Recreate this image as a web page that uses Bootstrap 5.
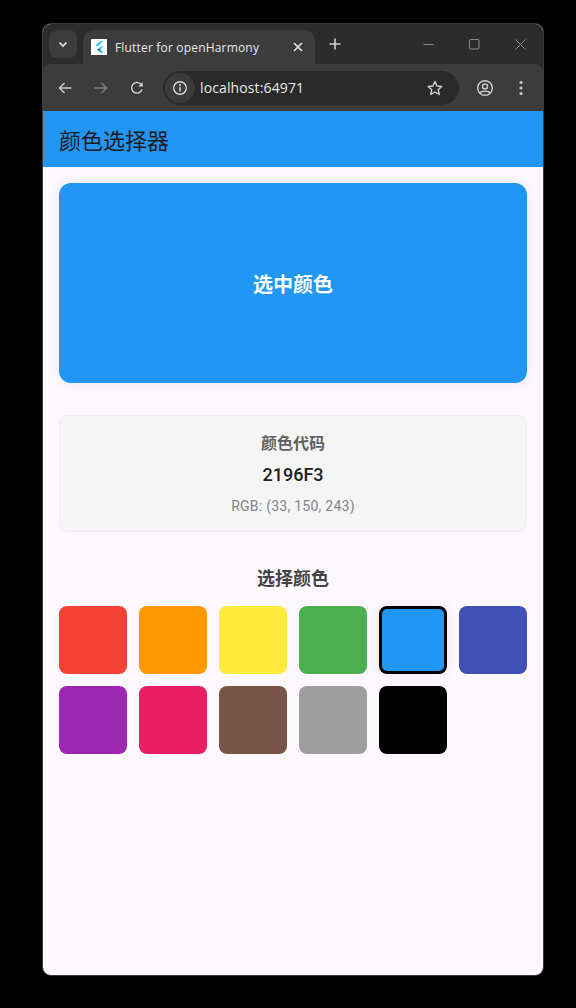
<!DOCTYPE html>
<html lang="zh">
<head>
<meta charset="utf-8">
<title>Flutter for openHarmony</title>
<link href="https://cdn.jsdelivr.net/npm/bootstrap@5.3.0/dist/css/bootstrap.min.css" rel="stylesheet">
<style>
html,body{height:100%;}
body{background:#000;font-family:Roboto,"Noto Sans CJK SC",sans-serif;overflow:hidden;}
.stage{padding:24px 33px 33px 43px;height:1008px;}
.win{height:951px;border-radius:8px;overflow:hidden;background:#fdf8fe;box-shadow:0 0 0 1px #3a3a3a;}
.chromebar{background:#2c2c2c;}
.strip{height:40px;}
.tabmenu{width:28px;height:28px;margin:6px 0 0 6px;border-radius:8px;background:#3c3c3c;}
.tabitem{width:232px;height:34px;margin:6px 0 0 6px;background:#3c3c3c;border-radius:10px 10px 0 0;padding:0 8px;color:#e6e6e6;font:12px "Open Sans",sans-serif;letter-spacing:.18px;}
.favi{width:16px;height:16px;background:#fff;}
.winbtn{width:46px;}
.toolbar{height:47px;background:#3c3c3c;padding:0 4px 0 6px;border-radius:8px 8px 0 0;}
.omni{width:296px;height:34px;border-radius:17px;background:#2a2a2a;margin-left:10px;padding:0 16px 0 2px;color:#e8e8e8;font:14px "Open Sans",sans-serif;letter-spacing:.12px;}
.infobub{width:30px;height:30px;border-radius:50%;background:#3c3c3c;margin-right:5px;}
.tbtn{width:32px;}
.appbar{height:56px;background:#2196f3;padding:4px 16px 0;color:#1d1b20;font-size:22px;}
.pagebody{padding:16px;}
.swatchbig{height:200px;padding-top:4px;background:#2196f3;border-radius:12px;box-shadow:0 0 8px 2px rgba(80,50,110,.06);color:#fff;font-size:20px;font-weight:700;}
.codebox{height:117px;margin-top:32px;background:#f5f5f5;border:1px solid #f2eef4;border-radius:8px;}
.codelabel{font-size:16px;font-weight:700;color:#616161;line-height:22px;margin-top:17px;}
.codeval{font-size:18px;font-weight:500;color:#212121;line-height:24px;margin-top:8px;}
.codergb{font-size:14px;color:#858585;line-height:20px;margin-top:9px;letter-spacing:.25px;}
.picktitle{font-size:18px;font-weight:700;color:#424242;line-height:24px;margin-top:35px;margin-bottom:15px;}
.palette{display:grid;grid-template-columns:repeat(6,68px);gap:12px;}
.chip{height:68px;border-radius:8px;}
.chip-on{border:3px solid #000;box-shadow:0 0 8px 2px rgba(80,50,110,.07);}
</style>
</head>
<body>
<div class="stage">
<div class="win d-flex flex-column">
  <div class="chromebar flex-shrink-0">
  <div class="strip d-flex align-items-start">
    <div class="tabmenu d-flex align-items-center justify-content-center">
      <svg width="12" height="12" viewBox="0 0 12 12"><path d="M2.500 4.500 6 8l3.500-3.500" fill="none" stroke="#e6e6e6" stroke-width="1.700"/></svg>
    </div>
    <div class="tabitem d-flex align-items-center">
      <span class="favi d-flex align-items-center justify-content-center flex-shrink-0">
        <svg width="14" height="14" viewBox="0 0 16 16"><path d="M9.500 1h3.500L6 8 4 6z" fill="#47c5fb"/><path d="M9.500 7.500H13L9.500 11 7.700 9.300z" fill="#47c5fb"/><path d="M7.700 12.700 6 11l1.700-1.700 1.800 1.700z" fill="#00569e"/><path d="M9.500 14.500H13l-3.500-3.500-1.800 1.700z" fill="#00b5f8"/></svg>
      </span>
      <span class="ms-2 flex-grow-1 text-nowrap">Flutter for openHarmony</span>
      <svg width="10" height="10" viewBox="0 0 10 10" class="me-1"><path d="M1 1l8 8M9 1 1 9" stroke="#e6e6e6" stroke-width="1.600"/></svg>
    </div>
    <div class="d-flex align-items-center justify-content-center" style="width:40px;height:40px">
      <svg width="12" height="12" viewBox="0 0 12 12"><path d="M6 .5v11M.5 6h11" stroke="#d0d0d0" stroke-width="1.600"/></svg>
    </div>
    <div class="d-flex ms-auto align-items-center" style="height:40px">
      <span class="winbtn d-flex justify-content-center"><svg width="11" height="11" viewBox="0 0 11 11"><path d="M.5 5.500h10" stroke="#8c8c8c"/></svg></span>
      <span class="winbtn d-flex justify-content-center"><svg width="11" height="11" viewBox="0 0 11 11"><rect x=".5" y=".5" width="9.500" height="9.500" rx="1" fill="none" stroke="#8c8c8c"/></svg></span>
      <span class="winbtn d-flex justify-content-center"><svg width="11" height="11" viewBox="0 0 11 11"><path d="M.5.5l10 10M10.500.5l-10 10" stroke="#8c8c8c"/></svg></span>
    </div>
  </div>
  <div class="toolbar d-flex align-items-center">
    <span class="tbtn d-flex justify-content-center"><svg width="16" height="16" viewBox="0 0 16 16"><path d="M14.500 8H2.500M7.500 3 2.500 8l5 5" fill="none" stroke="#c8c8c8" stroke-width="1.500"/></svg></span>
    <span class="tbtn d-flex justify-content-center ms-1"><svg width="16" height="16" viewBox="0 0 16 16"><path d="M1.500 8h12M8.500 3l5 5-5 5" fill="none" stroke="#7d7d7d" stroke-width="1.500"/></svg></span>
    <span class="tbtn d-flex justify-content-center ms-1"><svg width="16" height="16" viewBox="0 0 16 16"><path d="M13 9.500A5.300 5.300 0 1 1 11.700 4L13.500 6" fill="none" stroke="#c8c8c8" stroke-width="1.500"/><path d="M13.700 2v4.500H9.200z" fill="#c8c8c8"/></svg></span>
    <div class="omni d-flex align-items-center">
      <span class="infobub d-flex align-items-center justify-content-center flex-shrink-0">
        <svg width="16" height="16" viewBox="0 0 16 16"><circle cx="8" cy="8" r="6.300" fill="none" stroke="#d8d8d8" stroke-width="1.400"/><path d="M8 7v4.500" stroke="#d8d8d8" stroke-width="1.500"/><circle cx="8" cy="5" r="1" fill="#d8d8d8"/></svg>
      </span>
      <span class="flex-grow-1">localhost:64971</span>
      <svg width="16" height="16" viewBox="0 0 16 16"><path d="M8 1.500 10 6l4.800.5-3.600 3.200 1 4.800L8 12l-4.200 2.500 1-4.800L1.200 6.500 6 6z" fill="none" stroke="#d0d0d0" stroke-width="1.400" stroke-linejoin="round"/></svg>
    </div>
    <span class="d-flex justify-content-center" style="margin-left:16px;width:20px"><svg width="18" height="18" viewBox="0 0 18 18"><circle cx="9" cy="9" r="7.300" fill="none" stroke="#c8c8c8" stroke-width="1.500"/><circle cx="9" cy="7.500" r="2.500" fill="none" stroke="#c8c8c8" stroke-width="1.500"/><path d="M4 14c1-2.500 9-2.500 10 0" fill="none" stroke="#c8c8c8" stroke-width="1.500"/></svg></span>
    <span class="d-flex justify-content-center" style="margin-left:22px;width:8px"><svg width="4" height="16" viewBox="0 0 4 16"><circle cx="2" cy="2.500" r="1.600" fill="#c8c8c8"/><circle cx="2" cy="8" r="1.600" fill="#c8c8c8"/><circle cx="2" cy="13.500" r="1.600" fill="#c8c8c8"/></svg></span>
  </div>
  </div>
  <div class="appbar d-flex align-items-center flex-shrink-0">颜色选择器</div>
  <div class="pagebody flex-grow-1">
    <div class="swatchbig d-flex align-items-center justify-content-center">选中颜色</div>
    <div class="codebox text-center">
      <div class="codelabel">颜色代码</div>
      <div class="codeval">2196F3</div>
      <div class="codergb">RGB: (33, 150, 243)</div>
    </div>
    <div class="picktitle text-center">选择颜色</div>
    <div class="palette">
      <div class="chip" style="background:#f44336"></div>
      <div class="chip" style="background:#ff9800"></div>
      <div class="chip" style="background:#ffeb3b"></div>
      <div class="chip" style="background:#4caf50"></div>
      <div class="chip chip-on" style="background:#2196f3"></div>
      <div class="chip" style="background:#3f51b5"></div>
      <div class="chip" style="background:#9c27b0"></div>
      <div class="chip" style="background:#e91e63"></div>
      <div class="chip" style="background:#795548"></div>
      <div class="chip" style="background:#9e9e9e"></div>
      <div class="chip" style="background:#000"></div>
    </div>
  </div>
</div>
</div>
<script src="https://cdn.jsdelivr.net/npm/bootstrap@5.3.0/dist/js/bootstrap.bundle.min.js"></script>
</body>
</html>
